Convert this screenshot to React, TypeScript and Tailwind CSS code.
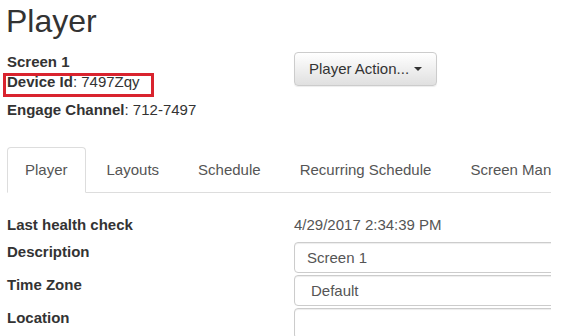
import React from 'react';

const tabs = ['Player', 'Layouts', 'Schedule', 'Recurring Schedule', 'Screen Management'];

const App: React.FC = () => {
  return (
    <div className="w-[563px] h-[336px] overflow-hidden bg-white font-['Liberation_Sans',Arial,sans-serif] text-[#333]">
      <div className="w-[551px] h-full overflow-hidden">
        <div className="w-[640px] pl-[7px]">
          {/* Page title */}
          <h1 className="mt-[4px] -ml-[1px] text-[32px] leading-[35px] font-normal text-[#333]">Player</h1>

          {/* Device info + action button */}
          <div className="mt-[13px] flex">
            <div className="relative w-[287px] text-[15px] leading-[20px]">
              <div><span className="font-bold">Screen 1</span></div>
              <div><span className="font-bold">Device Id</span>: 7497Zqy</div>
              <div className="mt-[8px]"><span className="font-bold">Engage Channel</span>: 712-7497</div>
              {/* highlight box */}
              <div className="absolute left-[-4px] top-[21px] w-[151px] h-[24px] border-[3px] border-[#d9232e]" />
            </div>
            <button className="h-[34px] px-[14px] flex items-center gap-[5px] rounded-[4px] border border-[#ccc] bg-gradient-to-b from-white to-[#e0e0e0] text-[15px] text-[#333] shadow-[0_1px_1px_rgba(0,0,0,0.075)]">
              Player Action...
              <span className="w-0 h-0 border-l-[4px] border-r-[4px] border-t-[4px] border-l-transparent border-r-transparent border-t-[#333]" />
            </button>
          </div>

          {/* Tabs */}
          <div className="mt-[27px] flex border-b border-[#ddd] text-[15px] text-[#555] whitespace-nowrap">
            {tabs.map((t, i) => (
              <div
                key={t}
                className={
                  i === 0
                    ? '-mb-px mr-[3px] px-[17px] py-[11px] leading-[22px] border border-[#ddd] border-b-white bg-white rounded-t-[4px]'
                    : '-mb-px mr-[3px] px-[17px] py-[11px] leading-[22px] border border-transparent rounded-t-[4px]'
                }
              >
                {t}
              </div>
            ))}
          </div>

          {/* Form */}
          <div className="mt-[22px] text-[15px]">
            <div className="flex h-[27px] leading-[20px]">
              <div className="w-[287px] font-bold">Last health check</div>
              <div className="text-[#555]">4/29/2017 2:34:39 PM</div>
            </div>
            <div className="flex mb-[2px] leading-[20px]">
              <div className="w-[287px] font-bold">Description</div>
              <div className="flex-1 h-[31px] flex items-center pl-[12px] border border-[#ccc] rounded-[4px] text-[#555] shadow-[inset_0_1px_1px_rgba(0,0,0,0.075)]">
                Screen 1
              </div>
            </div>
            <div className="flex mb-[2px] leading-[20px]">
              <div className="w-[287px] font-bold">Time Zone</div>
              <div className="flex-1 h-[31px] flex items-center pl-[16px] border border-[#ccc] rounded-[4px] text-[#555] shadow-[inset_0_1px_1px_rgba(0,0,0,0.075)]">
                Default
              </div>
            </div>
            <div className="flex leading-[20px]">
              <div className="w-[287px] font-bold">Location</div>
              <div className="flex-1 h-[31px] border border-[#ccc] rounded-[4px] shadow-[inset_0_1px_1px_rgba(0,0,0,0.075)]" />
            </div>
          </div>
        </div>
      </div>
    </div>
  );
};

export default App;
